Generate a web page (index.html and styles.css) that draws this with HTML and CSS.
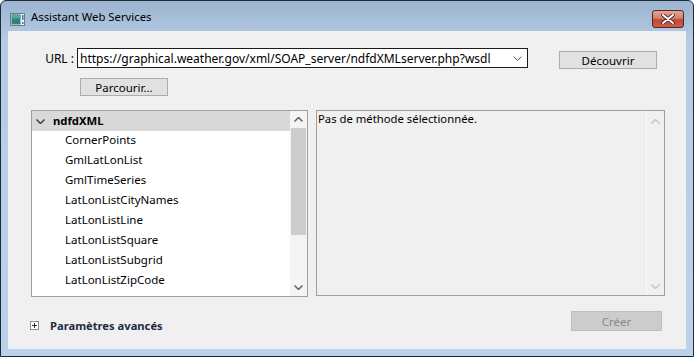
FILE: index.html
```html
<!DOCTYPE html>
<html>
<head>
    <title>Assistant Web Services</title>
    <link rel="stylesheet" href="styles.css">
</head>
<body>
    <div class="window">
        <div class="titlebar">
            <svg class="app-icon" width="15" height="13" viewBox="0 0 15 13">
                <rect x="0.5" y="0.5" width="14" height="12" fill="#f4f6f8" stroke="#6b7a88"/>
                <rect x="1.5" y="1.5" width="9" height="10" fill="#2f7f7a"/>
                <rect x="1.5" y="1.5" width="9" height="4" fill="#5aa59d"/>
                <rect x="12" y="2" width="1.5" height="5" fill="#3b6db0"/>
                <rect x="12" y="9" width="1.5" height="2" fill="#3b6db0"/>
            </svg>
            <span class="title">Assistant Web Services</span>
            <button class="close-btn">
                <svg width="14" height="10" viewBox="0 0 14 10">
                    <path d="M2 1 L12 9 M12 1 L2 9" stroke="#4a2020" stroke-width="3.6" stroke-linecap="round"/>
                    <path d="M2 1 L12 9 M12 1 L2 9" stroke="#ffffff" stroke-width="2" stroke-linecap="round"/>
                </svg>
            </button>
        </div>
        <div class="client">
            <div class="url-row">
                <label class="url-label">URL :</label>
                <div class="combo">
                    <span class="combo-text">https://graphical.weather.gov/xml/SOAP_server/ndfdXMLserver.php?wsdl</span>
                    <svg class="combo-arrow" width="9" height="5" viewBox="0 0 9 5">
                        <path d="M0.5 0.5 L4.5 4.5 L8.5 0.5" fill="none" stroke="#606060" stroke-width="1"/>
                    </svg>
                </div>
                <button class="btn discover-btn">Découvrir</button>
            </div>
            <div class="browse-row">
                <button class="btn browse-btn">Parcourir...</button>
            </div>
            <div class="panels">
                <div class="tree">
                    <div class="tree-list">
                        <div class="tree-root">
                            <svg class="tree-chevron" width="9" height="5" viewBox="0 0 9 5">
                                <path d="M0.5 0.5 L4.5 4.5 L8.5 0.5" fill="none" stroke="#404040" stroke-width="1.5"/>
                            </svg>
                            <span>ndfdXML</span>
                        </div>
                        <div class="tree-item">CornerPoints</div>
                        <div class="tree-item">GmlLatLonList</div>
                        <div class="tree-item">GmlTimeSeries</div>
                        <div class="tree-item">LatLonListCityNames</div>
                        <div class="tree-item">LatLonListLine</div>
                        <div class="tree-item">LatLonListSquare</div>
                        <div class="tree-item">LatLonListSubgrid</div>
                        <div class="tree-item">LatLonListZipCode</div>
                        <div class="tree-item">NDFDgen</div>
                    </div>
                    <div class="scrollbar">
                        <div class="sb-arrow">
                            <svg width="9" height="5" viewBox="0 0 9 5"><path d="M0.5 4.5 L4.5 0.5 L8.5 4.5" fill="none" stroke="#606060" stroke-width="1.5"/></svg>
                        </div>
                        <div class="sb-track">
                            <div class="sb-thumb"></div>
                        </div>
                        <div class="sb-arrow">
                            <svg width="9" height="5" viewBox="0 0 9 5"><path d="M0.5 0.5 L4.5 4.5 L8.5 0.5" fill="none" stroke="#606060" stroke-width="1.5"/></svg>
                        </div>
                    </div>
                </div>
                <div class="detail">
                    <div class="detail-text">Pas de méthode sélectionnée.</div>
                    <div class="scrollbar disabled">
                        <div class="sb-arrow">
                            <svg width="9" height="5" viewBox="0 0 9 5"><path d="M0.5 4.5 L4.5 0.5 L8.5 4.5" fill="none" stroke="#c6c6c6" stroke-width="1.5"/></svg>
                        </div>
                        <div class="sb-track"></div>
                        <div class="sb-arrow">
                            <svg width="9" height="5" viewBox="0 0 9 5"><path d="M0.5 0.5 L4.5 4.5 L8.5 0.5" fill="none" stroke="#c6c6c6" stroke-width="1.5"/></svg>
                        </div>
                    </div>
                </div>
            </div>
            <div class="footer">
                <div class="advanced">
                    <span class="plus-box">
                        <svg width="9" height="9" viewBox="0 0 9 9">
                            <rect x="0.5" y="0.5" width="8" height="8" fill="#fdfdfd" stroke="#8e8f8f"/>
                            <path d="M2 4.5 H7 M4.5 2 V7" stroke="#303030" stroke-width="1"/>
                        </svg>
                    </span>
                    <span class="advanced-label">Paramètres avancés</span>
                </div>
                <button class="btn create-btn" disabled>Créer</button>
            </div>
        </div>
    </div>
</body>
</html>
```

FILE: styles.css
```css
body {
    margin: 0;
    width: 694px;
    height: 357px;
    overflow: hidden;
    font-family: "Noto Sans", "Open Sans", sans-serif;
    font-size: 11.5px;
    color: #000;
}
.window {
    box-sizing: border-box;
    width: 694px;
    height: 357px;
    display: flex;
    flex-direction: column;
    border: 1px solid #1e2a36;
    border-radius: 6px 6px 0 0;
    padding: 0 7px 7px;
    background: linear-gradient(#9cb4cf 0px, #b6cce6 40px, #bcd2eb 100%);
}
.titlebar {
    height: 30px;
    display: flex;
    align-items: flex-start;
}
.app-icon {
    margin: 12px 0 0 2px;
}
.title {
    margin: 8px 0 0 6px;
    font-size: 11.3px;
    color: #000;
}
.close-btn {
    margin: 9px 2px 0 auto;
    width: 32px;
    height: 18px;
    padding: 0;
    border: 1px solid #5a2320;
    border-radius: 3px;
    background: linear-gradient(#e4a594 0%, #d0806c 45%, #bf4a34 55%, #c8604a 100%);
    display: flex;
    align-items: center;
    justify-content: center;
}
.client {
    flex: 1;
    background: #f0f0f0;
    padding-top: 17px;
    display: flex;
    flex-direction: column;
}
.url-row {
    display: flex;
    align-items: flex-start;
}
.url-label {
    width: 69px;
    box-sizing: border-box;
    text-align: right;
    padding: 2px 3px 0 0;
    font-size: 12px;
}
.combo {
    box-sizing: border-box;
    width: 451px;
    height: 20px;
    background: #fff;
    border: 1px solid #1b1b1b;
    display: flex;
    align-items: center;
    padding: 0 5px 0 2px;
    font-size: 12px;
}
.combo-text {
    flex: 1;
    white-space: nowrap;
    overflow: hidden;
}
.btn {
    box-sizing: border-box;
    font-family: inherit;
    font-size: 11.5px;
    background: #e1e1e1;
    border: 1px solid #adadad;
    padding: 0;
    height: 18px;
    line-height: 15px;
    color: #000;
}
.discover-btn {
    width: 98px;
    margin: 3px 0 0 31px;
}
.browse-row {
    padding: 9px 0 0 72px;
}
.browse-btn {
    width: 88px;
}
.panels {
    display: flex;
    gap: 8px;
    margin-top: 14px;
    padding-left: 23px;
}
.tree {
    box-sizing: border-box;
    width: 277px;
    height: 187px;
    border: 1px solid #a0a0a0;
    background: #fff;
    display: flex;
    overflow: hidden;
}
.tree-list {
    flex: 1;
    overflow: hidden;
}
.tree-root {
    box-sizing: border-box;
    height: 20px;
    padding-bottom: 2px;
    background: #d9d9d9;
    display: flex;
    align-items: center;
    font-weight: bold;
    font-size: 11.3px;
}
.tree-chevron {
    margin: 2px 8px 0 4px;
}
.tree-item {
    height: 20px;
    line-height: 17px;
    padding-left: 33px;
    white-space: nowrap;
}
.scrollbar {
    width: 17px;
    display: flex;
    flex-direction: column;
    background: #f4f4f4;
}
.sb-arrow {
    height: 17px;
    display: flex;
    align-items: center;
    justify-content: center;
}
.sb-track {
    flex: 1;
}
.sb-thumb {
    height: 107px;
    margin: 0 1px;
    background: #cdcdcd;
}
.detail {
    box-sizing: border-box;
    width: 349px;
    height: 186px;
    border: 1px solid #a0a0a0;
    background: #f0f0f0;
    display: flex;
}
.detail-text {
    flex: 1;
    padding: 0 0 0 1px;
    font-size: 11.3px;
}
.scrollbar.disabled {
    background: #f0f0f0;
    border-left: 1px solid #fbfbfb;
}
.scrollbar.disabled .sb-arrow {
    padding-top: 2px;
}
.footer {
    display: flex;
    align-items: flex-start;
    justify-content: space-between;
    margin-top: 14px;
    padding: 0 24px 0 22px;
}
.advanced {
    display: flex;
    align-items: center;
    margin-top: 7px;
}
.plus-box {
    display: flex;
    margin-right: 11px;
}
.advanced-label {
    font-weight: bold;
    font-size: 11.2px;
    color: #1c2c3e;
}
.create-btn {
    width: 91px;
    height: 20px;
    background: #cccccc;
    border-color: #bfbfbf;
    color: #8a8a8a;
}
```
